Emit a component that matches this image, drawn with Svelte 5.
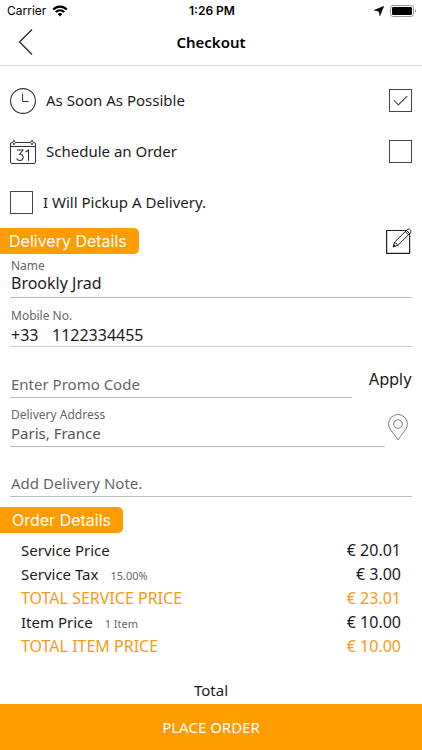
<script>
  let timing = $state({ asap: true, scheduled: false, pickup: false });
  let customer = $state({ name: 'Brookly Jrad', code: '+33', phone: '1122334455' });
  let promo = $state('');
  let address = $state('Paris, France');
  let note = $state('');

  const lines = [
    { label: 'Service Price', detail: '', price: '€ 20.01', total: false },
    { label: 'Service Tax', detail: '15.00%', price: '€ 3.00', total: false },
    { label: 'TOTAL SERVICE PRICE', detail: '', price: '€ 23.01', total: true },
    { label: 'Item Price', detail: '1 Item', price: '€ 10.00', total: false },
    { label: 'TOTAL ITEM PRICE', detail: '', price: '€ 10.00', total: true }
  ];
</script>

<div class="screen">
  <div class="status">
    <div class="carrier">
      <span>Carrier</span>
      <svg width="16" height="12" viewBox="0 0 16 12" aria-hidden="true">
        <g fill="none" stroke="#000" stroke-width="2.1">
          <path d="M1.2 4.5C5 .7 11 .7 14.8 4.5" />
          <path d="M3.7 7.1c2.5-2.4 6.1-2.4 8.6 0" />
        </g>
        <path d="M5.5 9c1.5-1.3 3.5-1.3 5 0L8 11.5z" />
      </svg>
    </div>
    <span class="time">1:26 PM</span>
    <div class="power">
      <svg width="10" height="10" viewBox="0 0 10 10" aria-hidden="true">
        <path d="M9.8.2 5.9 9.8 4.9 5.2.2 4.2z" stroke="#000" stroke-width=".5" />
      </svg>
      <svg width="27" height="12" viewBox="0 0 27 12" aria-hidden="true">
        <rect x=".5" y=".5" width="23" height="11" rx="2.6" fill="none" stroke="#999" />
        <rect x="2" y="2" width="20" height="8" rx="1.3" />
        <path d="M25 4c1.4.5 1.4 3.5 0 4z" fill="#999" />
      </svg>
    </div>
  </div>

  <header>
    <button class="icon" type="button" aria-label="Back">
      <svg width="16" height="28" viewBox="0 0 16 28"><path d="M14 1.5 1.5 14 14 26.5" fill="none" stroke="#222" stroke-width="1.2" /></svg>
    </button>
    <h1>Checkout</h1>
  </header>

  <main>
    <section class="options">
      <div class="option">
        <svg width="26" height="26" viewBox="0 0 26 26" fill="none" stroke="#333" aria-hidden="true">
          <circle cx="13" cy="13" r="12.4" stroke-width="1.1" />
          <path d="M12.6 5.5v8h6" />
        </svg>
        <label for="asap">As Soon As Possible</label>
        <input id="asap" type="checkbox" bind:checked={timing.asap} />
      </div>
      <div class="option">
        <svg width="26" height="26" viewBox="0 0 26 26" fill="none" stroke="#333" aria-hidden="true">
          <path d="M2.5 3.5H2A1.5 1.5 0 0 0 .5 5v18A1.5 1.5 0 0 0 2 24.5h22a1.5 1.5 0 0 0 1.5-1.5V5A1.5 1.5 0 0 0 24 3.5h-.5M5.500 3.500h15M.5 7.500h25" />
          <path d="M4 1.200 5.300 3.500 4 5.800 2.700 3.500zM22 1.200 23.300 3.500 22 5.800 20.700 3.500z" fill="#fff" />
          <path d="M7 11h6l-3.300 4.200c4.600-.3 4.600 6.300.2 6.300-1.700 0-2.700-.7-3.200-2M15.500 13l3-2v10.700" stroke-width="1.1" />
        </svg>
        <label for="scheduled">Schedule an Order</label>
        <input id="scheduled" type="checkbox" bind:checked={timing.scheduled} />
      </div>
      <div class="option">
        <input id="pickup" type="checkbox" bind:checked={timing.pickup} />
        <label for="pickup">I Will Pickup A Delivery.</label>
      </div>
    </section>

    <div class="heading">
      <h2>Delivery Details</h2>
      <button class="icon" type="button" aria-label="Edit delivery details">
        <svg width="26" height="26" viewBox="0 0 26 26" fill="#fff" stroke="#222" stroke-linejoin="round">
          <path d="M.6 2.500h23v22.900H.6z" stroke-width="1.200" />
          <path d="m7.200 18.800 1.500-4.700L21 1.800c.9-.9 2.300-.9 3.200 0s.9 2.300 0 3.200L11.900 17.300zM8.700 14.100l3.200 3.200M19.300 3.500l3.200 3.200M20.500 2.300l3.200 3.200" />
          <path d="m7.200 18.800.6-2 1.400 1.400z" fill="#222" />
        </svg>
      </button>
    </div>

    <form id="checkout" onsubmit={(event) => event.preventDefault()}>
      <div class="field name">
        <label for="name">Name</label>
        <input id="name" type="text" bind:value={customer.name} />
      </div>
      <div class="field phone">
        <label for="phone">Mobile No.</label>
        <div class="pair">
          <input class="code" type="text" aria-label="Country code" bind:value={customer.code} />
          <input id="phone" type="tel" bind:value={customer.phone} />
        </div>
      </div>
      <div class="row promo">
        <div class="field muted">
          <input type="text" aria-label="Promo code" placeholder="Enter Promo Code" bind:value={promo} />
        </div>
        <button class="apply" type="button">Apply</button>
      </div>
      <div class="row place">
        <div class="field muted">
          <label for="address">Delivery Address</label>
          <input id="address" type="text" bind:value={address} />
        </div>
        <button class="icon" type="button" aria-label="Choose location">
          <svg width="20" height="27" viewBox="0 0 20 27" fill="none" stroke="#808080">
            <path d="M10 26C7 20.500.6 15.400.6 9.800a9.400 9.300 0 0 1 18.800 0C19.400 15.400 13 20.500 10 26z" />
            <circle cx="10" cy="10" r="4.300" />
          </svg>
        </button>
      </div>
      <div class="field muted note">
        <input type="text" aria-label="Delivery note" placeholder="Add Delivery Note." bind:value={note} />
      </div>
    </form>

    <div class="heading order">
      <h2>Order Details</h2>
    </div>
    <dl>
      {#each lines as line}
        <div class="line" class:total={line.total}>
          <dt>{line.label}{#if line.detail}<small>{line.detail}</small>{/if}</dt>
          <dd>{line.price}</dd>
        </div>
      {/each}
    </dl>
  </main>

  <footer>
    <p>Total</p>
    <button type="submit" form="checkout">PLACE ORDER</button>
  </footer>
</div>

<style>
  :global(body) {
    margin: 0;
    background: #fff;
  }
  .screen {
    display: flex;
    flex-direction: column;
    min-height: 100vh;
    box-sizing: border-box;
    font: 15px/20px 'Noto Sans', sans-serif;
    color: #1c1c1c;
    background: #fff;
  }
  button,
  input {
    font: inherit;
    color: inherit;
    border: 0;
    margin: 0;
    padding: 0;
    background: none;
    border-radius: 0;
  }
  button {
    cursor: pointer;
  }
  svg {
    display: block;
    flex: none;
  }
  h1,
  h2,
  p,
  dl,
  dd {
    margin: 0;
  }
  .icon {
    display: block;
    flex: none;
  }
  .status {
    display: grid;
    grid-template-columns: 1fr auto 1fr;
    align-items: center;
    height: 22px;
    padding: 0 5px 0 7px;
    font: 12px/20px Inter, sans-serif;
    color: #000;
  }
  .carrier,
  .power {
    display: flex;
    align-items: center;
    gap: 6px;
  }
  .power {
    justify-content: flex-end;
  }
  .time {
    font-weight: 600;
  }
  header {
    display: grid;
    grid-template-columns: 1fr auto 1fr;
    align-items: center;
    box-sizing: border-box;
    height: 44px;
    padding: 0 18px 4px;
    border-bottom: 1px solid #ddd;
  }
  header .icon {
    justify-self: start;
  }
  h1 {
    font-size: 15px;
    font-weight: 600;
    color: #000;
  }
  .options {
    padding: 9px 10px 0;
  }
  .option {
    display: flex;
    align-items: center;
    gap: 10px;
    height: 51px;
  }
  .option label {
    padding-bottom: 2px;
  }
  .option label:not(:last-child) {
    flex: 1;
  }
  input[type='checkbox'] {
    appearance: none;
    display: grid;
    place-items: center;
    flex: none;
    box-sizing: border-box;
    width: 23px;
    height: 23px;
    border: 1px solid #444;
  }
  input[type='checkbox']:checked::before {
    content: '';
    width: 12px;
    height: 6px;
    margin-bottom: 4px;
    border: solid #333;
    border-width: 0 0 1px 1px;
    transform: rotate(-45deg);
  }
  .heading {
    display: flex;
    align-items: center;
    justify-content: space-between;
    height: 26px;
    padding-right: 10px;
  }
  h2 {
    padding: 0 12px 0 9px;
    font: 16px/26px Inter, sans-serif;
    color: #fff;
    background: #ff9c00;
    border-radius: 0 5px 5px 0;
  }
  .order h2 {
    padding-left: 12px;
  }
  form {
    padding: 5px 10px 10px;
  }
  .field {
    flex: 1;
    min-width: 0;
    border-bottom: 1px solid #bbb;
  }
  .field label {
    display: block;
    padding-left: 1px;
    font-size: 12px;
    line-height: 14px;
    color: #666;
  }
  .field input {
    display: block;
    box-sizing: border-box;
    width: 100%;
    height: 24px;
    padding: 0 1px 2px;
  }
  .field.name input {
    padding-bottom: 4px;
    font-size: 16px;
  }
  .muted input {
    color: #555;
  }
  .field ::placeholder {
    color: #666;
    opacity: 1;
  }
  .phone {
    margin-top: 11px;
    border-color: #ccc;
  }
  .pair {
    display: flex;
    gap: 4px;
  }
  .phone .pair input {
    height: 23px;
    padding-bottom: 0;
    font-size: 16px;
  }
  .pair .code {
    flex: none;
    width: 37px;
  }
  .row {
    display: flex;
    align-items: flex-end;
  }
  .promo {
    gap: 16px;
    margin-top: 22px;
  }
  .apply {
    padding-bottom: 9px;
    font: 16px/20px Inter, sans-serif;
  }
  .place {
    gap: 3px;
    margin-top: 10px;
  }
  .place .icon {
    padding: 0 4px 6px 0;
  }
  .note {
    margin-top: 25px;
  }
  dl {
    padding: 5px 21px 0;
  }
  .line {
    display: flex;
    justify-content: space-between;
    height: 24px;
    line-height: 24px;
  }
  .total {
    color: #f79a18;
  }
  .total dt,
  dd {
    font-size: 16px;
  }
  small {
    margin-left: 12px;
    font-size: 11px;
    line-height: 12px;
    color: #666;
  }
  footer {
    margin-top: auto;
    text-align: center;
  }
  footer p {
    padding: 20px 0 4px;
  }
  footer button {
    display: block;
    width: 100%;
    height: 46px;
    color: #fff;
    background: #ff9c00;
  }
</style>
